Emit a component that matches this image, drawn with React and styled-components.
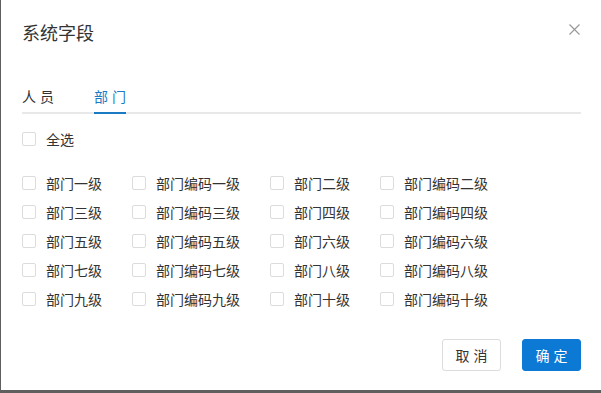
import React, { useState } from "react";
import styled, { createGlobalStyle } from "styled-components";

const Global = createGlobalStyle`
  html, body { margin: 0; padding: 0; }
  body {
    background: #5f5f5f;
    font-family: "Noto Sans CJK SC", "Noto Sans", sans-serif;
    overflow: hidden;
  }
`;

const Dialog = styled.div`
  position: relative;
  box-sizing: border-box;
  width: 600px;
  height: 390px;
  margin-left: 1px;
  background: #fff;
  padding: 20px 20px 19px 21px;
  display: flex;
  flex-direction: column;
`;

const Title = styled.h2`
  margin: 0;
  font-size: 18px;
  line-height: 24px;
  font-weight: 400;
  color: #333;
`;

const Close = styled.button`
  position: absolute;
  top: 22px;
  right: 20px;
  width: 14px;
  height: 14px;
  padding: 0;
  border: 0;
  background: transparent;
  display: flex;
  align-items: center;
  justify-content: center;
  cursor: pointer;
`;

const TabBar = styled.div`
  margin-top: 42px;
  display: flex;
  gap: 40px;
  border-bottom: 2px solid #e8e8e8;
`;

const Tab = styled.div`
  font-size: 14px;
  line-height: 20px;
  letter-spacing: 4px;
  white-space: nowrap;
  padding-bottom: 6px;
  margin-bottom: -2px;
  color: ${(p) => (p.$active ? "#1a7bc4" : "#333")};
  border-bottom: 2px solid ${(p) => (p.$active ? "#1a7bc4" : "transparent")};
  cursor: pointer;
  span { display: inline-block; margin-right: -4px; }
`;

const SelectAll = styled.div`
  margin-top: 15px;
`;

const Grid = styled.div`
  margin-top: 24px;
  display: grid;
  grid-template-columns: 110px 138px 110px auto;
  row-gap: 9px;
`;

const Item = styled.label`
  display: flex;
  align-items: center;
  gap: 10px;
  height: 20px;
  font-size: 14px;
  color: #333;
  cursor: pointer;
  white-space: nowrap;
`;

const Box = styled.span`
  box-sizing: border-box;
  width: 14px;
  height: 14px;
  border: 1px solid #dcdcdc;
  border-radius: 2px;
  background: ${(p) => (p.$checked ? "#1479d1" : "#fff")};
  flex: none;
`;

const Footer = styled.div`
  margin-top: auto;
  display: flex;
  justify-content: flex-end;
  gap: 21px;
`;

const Button = styled.button`
  box-sizing: border-box;
  width: 59px;
  height: 32px;
  border-radius: 3px;
  font-family: inherit;
  font-size: 14px;
  letter-spacing: 4px;
  padding: 0 0 0 4px;
  cursor: pointer;
  border: 1px solid ${(p) => (p.$primary ? "#0c7ad4" : "#dcdcdc")};
  background: ${(p) => (p.$primary ? "#0c7ad4" : "#fff")};
  color: ${(p) => (p.$primary ? "#fff" : "#333")};
`;

const nums = ["一", "二", "三", "四", "五", "六", "七", "八", "九", "十"];
const items = [];
nums.forEach((n) => {
  items.push(`部门${n}级`);
  items.push(`部门编码${n}级`);
});

function Check({ label }) {
  const [c, setC] = useState(false);
  return (
    <Item onClick={() => setC(!c)}>
      <Box $checked={c} />
      {label}
    </Item>
  );
}

export default function App() {
  const [tab, setTab] = useState(1);
  return (
    <>
      <Global />
      <Dialog>
        <Title>系统字段</Title>
        <Close aria-label="close">
          <svg width="11" height="11" viewBox="0 0 11 11">
            <path d="M0.5 0.5L10.5 10.5M10.5 0.5L0.5 10.5" stroke="#999" strokeWidth="1.2" fill="none" />
          </svg>
        </Close>
        <TabBar>
          <Tab $active={tab === 0} onClick={() => setTab(0)}><span>人员</span></Tab>
          <Tab $active={tab === 1} onClick={() => setTab(1)}><span>部门</span></Tab>
        </TabBar>
        <SelectAll>
          <Check label="全选" />
        </SelectAll>
        <Grid>
          {items.map((t) => (
            <Check key={t} label={t} />
          ))}
        </Grid>
        <Footer>
          <Button>取消</Button>
          <Button $primary>确定</Button>
        </Footer>
      </Dialog>
    </>
  );
}
